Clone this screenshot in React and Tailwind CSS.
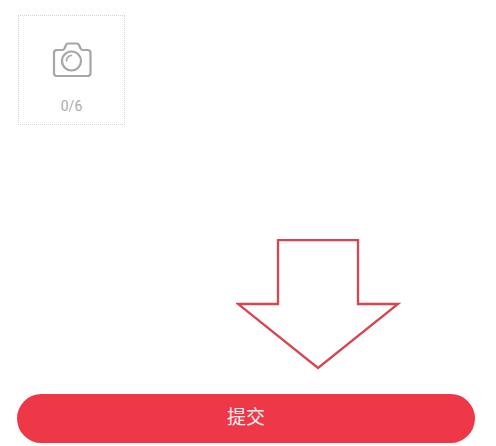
export default function App() {
  return (
    <div className="relative flex h-[446px] w-[496px] flex-col justify-between overflow-hidden bg-white pb-[3px] pl-[17px] pr-[21px] pt-[15px] font-['Liberation_Sans','Noto_Sans_CJK_SC',sans-serif]">
      <div className="ml-px flex h-[110px] w-[107px] flex-col items-center border-[1.5px] border-dotted border-[#d6d6d6]">
        <svg className="mt-[25px] block" width="40" height="36" viewBox="0 0 40 36" fill="none" stroke="#a6a6a6" strokeWidth="2.200" strokeLinejoin="round" strokeLinecap="round">
          <path d="M5 9h5c1.200 0 2-.5 2.500-1.500l1.500-3.500c.4-1 1.200-1.500 2.200-1.500h8.600c1 0 1.800.5 2.200 1.500l1.500 3.500c.5 1 1.300 1.500 2.500 1.500h4.500c1.700 0 3 1.300 3 3v20c0 1.700-1.300 3-3 3H5c-1.700 0-3-1.300-3-3V12c0-1.700 1.300-3 3-3z" />
          <circle cx="19.500" cy="20" r="9.500" />
          <path d="M14.500 20c0-3 2.200-5.500 5-5.500" strokeWidth="1.500" />
        </svg>
        <span className="mt-[21px] font-['Roboto',sans-serif] text-[14px] leading-[16px] text-[#ababab]">0/6</span>
      </div>

      <svg className="absolute left-[236px] top-[239px]" width="165" height="131" viewBox="0 0 165 131" fill="none" stroke="#d8444f" strokeWidth="2.300">
        <path d="M42 1H122V65H162L82 129L2 65H42Z" />
      </svg>

      <button className="flex h-[49px] w-[458px] items-center justify-center rounded-full bg-[#ee3848] text-[19px] text-[#fbeef0]">
        提交
      </button>
    </div>
  );
}
